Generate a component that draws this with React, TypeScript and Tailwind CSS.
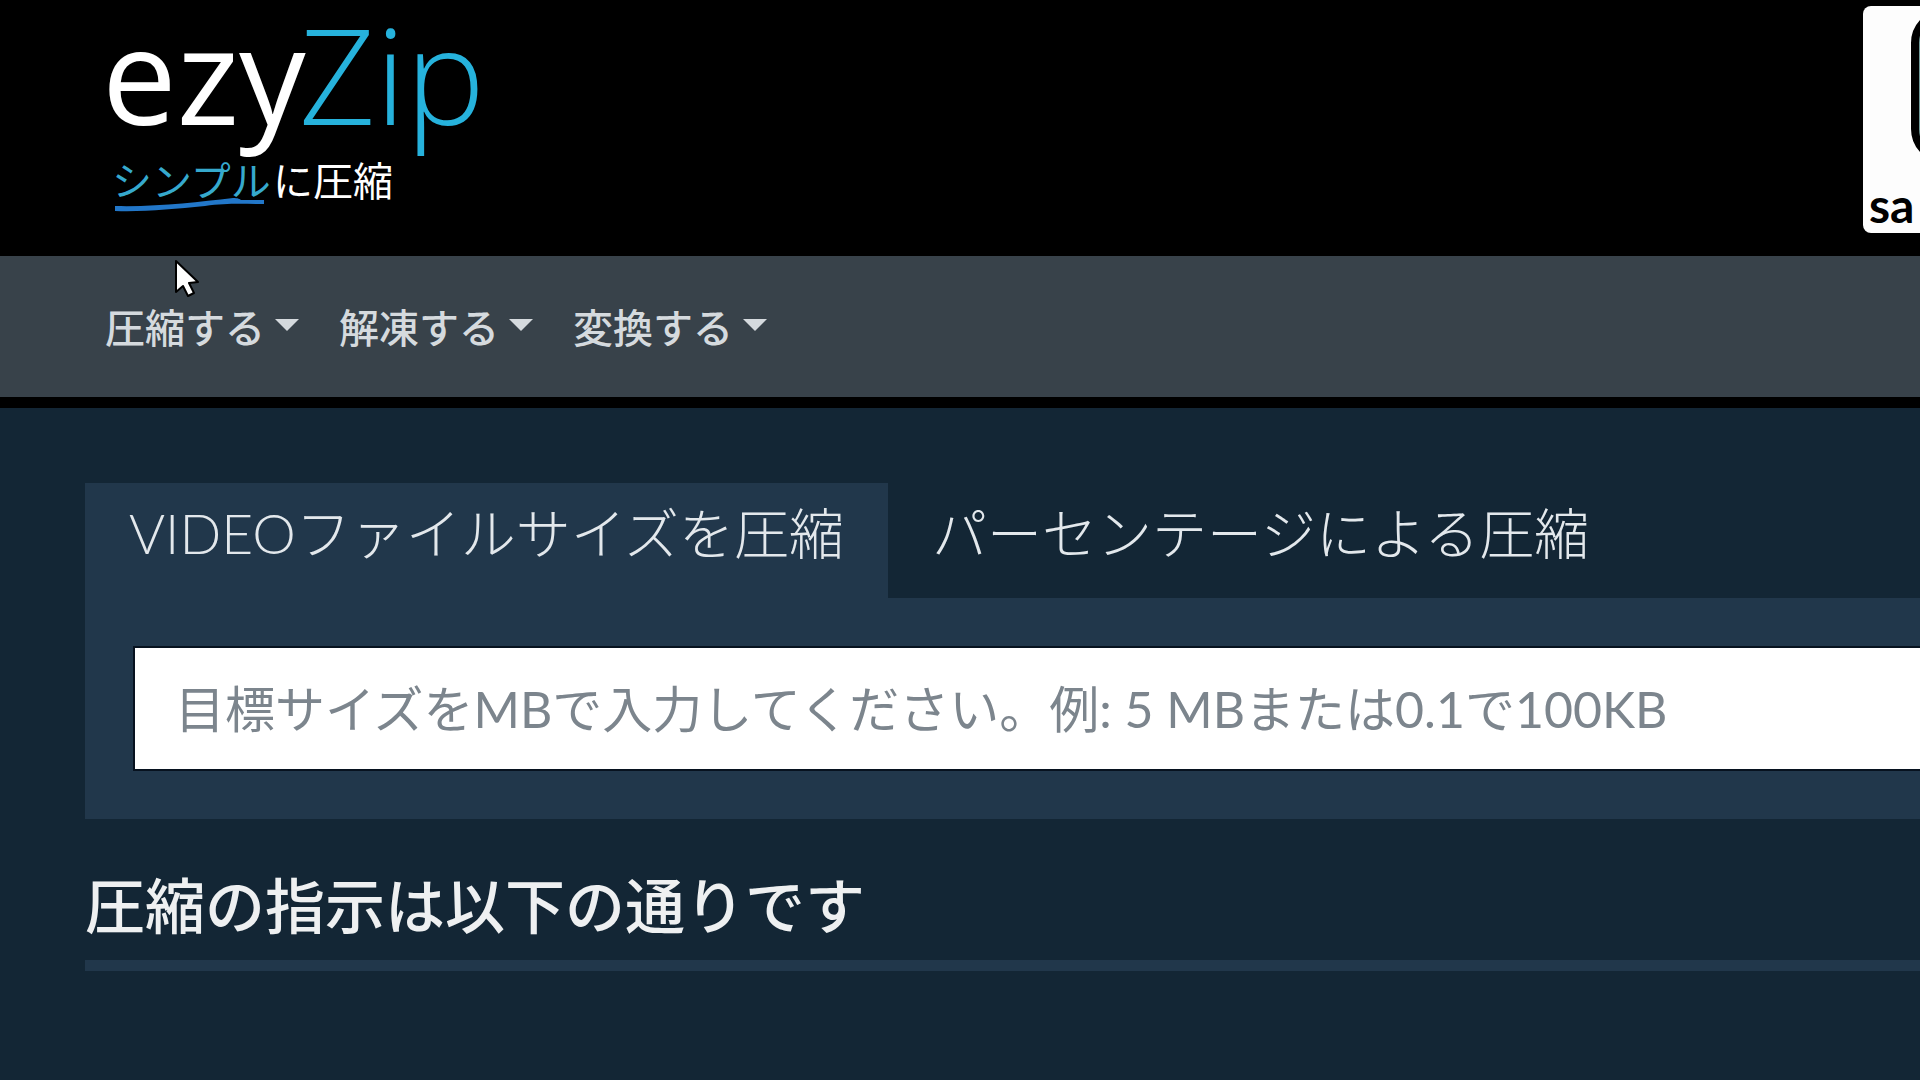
import React, { useState } from 'react';

const menus = ['圧縮する', '解凍する', '変換する'];
const tabs = ['VIDEOファイルサイズを圧縮', 'パーセンテージによる圧縮'];

function Logo() {
  return (
    <a href="/" aria-label="ezyZip" className="block">
      <svg width="400" height="224" viewBox="0 0 400 224" className="block">
        <g fontFamily="'Open Sans', 'Noto Sans', sans-serif" fontSize="133">
          <text x="1" y="125" fill="#ffffff">ezy</text>
          <text x="198" y="125" fill="#26b2dc" fontWeight="300">Zip</text>
        </g>
        <g fontFamily="'Noto Sans CJK JP', sans-serif" fontSize="40">
          <text x="11" y="196" fill="#36a9cd">シンプル</text>
          <text x="172" y="196" fill="#ffffff">に圧縮</text>
        </g>
        <path d="M14 206 C58 207 96 202 132 198 C137 198 139 199 140 200 L163 200 V204 C140 204 126 203 104 206 C72 209 44 212 14 211 Z" fill="#2277c9" />
      </svg>
    </a>
  );
}

function SponsorCard() {
  return (
    <a
      href="/sponsor"
      className="flex h-[227px] w-[57px] shrink-0 flex-col justify-between overflow-hidden rounded-l-lg bg-[#fdfdfd] text-black"
    >
      <svg width="57" height="160" viewBox="0 0 57 160" className="block">
        <rect x="52" y="7" width="120" height="146" rx="30" fill="#6f9a99" stroke="#000000" strokeWidth="8" />
      </svg>
      <span className="pl-1.5 pb-1 text-5xl leading-none font-bold">sa</span>
    </a>
  );
}

function MenuButton({ label }: { label: string }) {
  return (
    <button type="button" className="flex items-center gap-2.5 px-5 pt-2.5 pb-1.5 text-[40px] leading-[61px] font-medium text-[#d5dade]">
      {label}
      <svg width="24" height="12" viewBox="0 0 24 12" className="mb-2" fill="currentColor">
        <path d="M0 0H24L12 12Z" />
      </svg>
    </button>
  );
}

function Pointer() {
  return (
    <svg width="26" height="40" viewBox="0 0 26 40" className="pointer-events-none absolute top-[259px] left-[174px]">
      <path
        d="M2 2V33L9 27L14 37L20 34L15 24L24 23Z"
        fill="#ffffff"
        stroke="#000000"
        strokeWidth="2"
        strokeLinejoin="round"
      />
    </svg>
  );
}

export default function App() {
  const [active, setActive] = useState(0);

  return (
    <div className="relative min-h-screen overflow-hidden bg-[#132635] font-[Lato,'Noto_Sans_CJK_JP',sans-serif]">
      <header className="flex items-start justify-between bg-black pb-[23px] pl-[101px]">
        <Logo />
        <div className="pt-1.5">
          <SponsorCard />
        </div>
      </header>

      <nav className="flex border-b-[11px] border-black bg-[#38424a] py-8 pl-[85px]">
        {menus.map((label) => (
          <MenuButton key={label} label={label} />
        ))}
      </nav>

      <main className="pt-[75px] pl-[85px]">
        <div role="tablist" className="flex">
          {tabs.map((label, index) => (
            <button
              key={label}
              type="button"
              role="tab"
              aria-selected={index === active}
              onClick={() => setActive(index)}
              className={`px-11 pt-2.5 pb-[25px] text-[55px] leading-[80px] font-light whitespace-nowrap text-[#e3e8ec] ${
                index === active ? 'bg-[#21374b]' : ''
              }`}
            >
              {label}
            </button>
          ))}
        </div>

        <div role="tabpanel" className="bg-[#21374b] py-12 pl-12">
          <input
            type="text"
            aria-label="目標サイズ"
            placeholder="目標サイズをMBで入力してください。例: 5 MBまたは0.1で100KB"
            className="block h-[125px] w-full border-2 border-r-0 border-[#07121f] bg-white px-10 text-[50px] text-[#343a40] outline-none placeholder:text-[#7c858d]"
          />
        </div>

        <h2 className="mt-[42px] border-b-[11px] border-[#21374b] pb-[9px] text-[60px] leading-[90px] font-medium text-[#eef0f1]">
          圧縮の指示は以下の通りです
        </h2>
      </main>

      <Pointer />
    </div>
  );
}
